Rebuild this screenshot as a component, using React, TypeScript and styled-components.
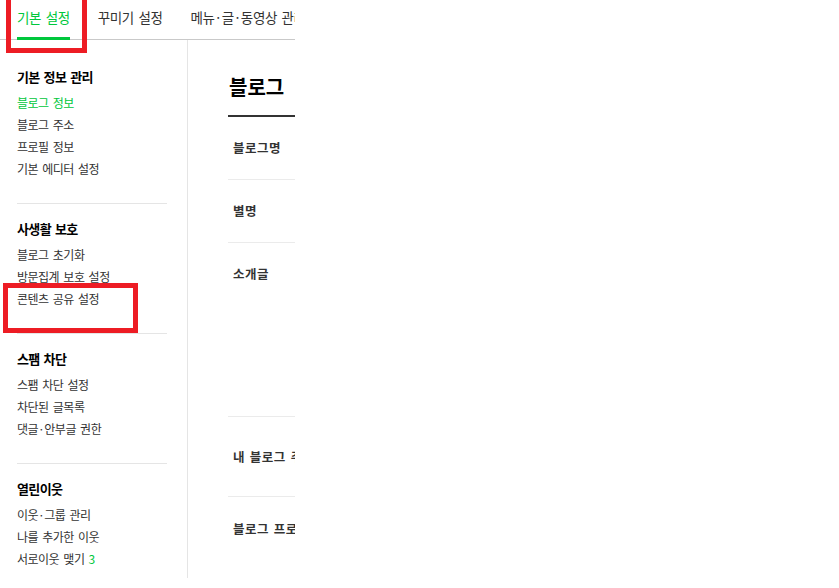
import React from 'react';
import styled, { createGlobalStyle } from 'styled-components';

const GlobalStyle = createGlobalStyle`
  html, body {
    margin: 0;
    padding: 0;
    background: #fff;
  }
  body {
    font-family: "Noto Sans CJK KR", "Noto Sans", sans-serif;
    color: #333;
  }
`;

const Viewport = styled.div`
  position: relative;
  width: 295px;
  height: 588px;
  overflow: hidden;
`;

const Page = styled.div`
  width: 900px;
`;

const TabBar = styled.div`
  display: flex;
  gap: 28px;
  height: 39px;
  padding-left: 17px;
  border-bottom: 1px solid #c9c9c9;
`;

const Tab = styled.div<{ $active?: boolean }>`
  box-sizing: border-box;
  height: 40px;
  margin-bottom: -1px;
  padding-top: 8px;
  font-size: 13.5px;
  letter-spacing: -0.4px;
  word-spacing: 2px;
  line-height: 18px;
  white-space: nowrap;
  color: ${p => (p.$active ? '#00c73c' : '#333')};
  border-bottom: 3px solid ${p => (p.$active ? '#00c73c' : 'transparent')};
`;

const Body = styled.div`
  display: flex;
`;

const Sidebar = styled.nav`
  width: 188px;
  height: 538px;
  padding-top: 12px;
  box-sizing: border-box;
  border-right: 1px solid #e5e5e5;
  flex-shrink: 0;
`;

const Group = styled.div<{ $last?: boolean }>`
  margin-left: 17px;
  width: 150px;
  padding: 15px 0 ${p => (p.$last ? '0' : '23px')};
  border-bottom: ${p => (p.$last ? 'none' : '1px solid #e5e5e5')};
`;

const GroupTitle = styled.div`
  font-size: 13px;
  font-weight: 700;
  letter-spacing: -0.6px;
  word-spacing: 1.5px;
  line-height: 20px;
  color: #000;
  margin-bottom: 5px;
`;

const MenuItem = styled.div<{ $active?: boolean }>`
  font-size: 12px;
  letter-spacing: -0.5px;
  word-spacing: 2px;
  line-height: 22px;
  color: ${p => (p.$active ? '#00c73c' : '#333')};
  white-space: nowrap;
`;

const Count = styled.span`
  color: #00c73c;
  margin-left: 4px;
`;

const Main = styled.main`
  flex: 1;
  padding-left: 40px;
`;

const Title = styled.h2`
  margin: 0;
  padding: 32px 0 13px 1px;
  font-size: 20px;
  font-weight: 700;
  line-height: 30px;
  word-spacing: 7px;
  color: #000;
  border-bottom: 2px solid #333;
  white-space: nowrap;
`;

const Row = styled.div<{ $h: number; $top?: boolean; $last?: boolean }>`
  display: flex;
  align-items: ${p => (p.$top ? 'flex-start' : 'center')};
  box-sizing: border-box;
  height: ${p => p.$h}px;
  padding-top: ${p => (p.$top ? '21px' : '0')};
  border-bottom: ${p => (p.$last ? 'none' : '1px solid #ebebeb')};
`;

const Label = styled.div`
  padding-left: 5px;
  width: 150px;
  font-size: 12.5px;
  font-weight: 700;
  line-height: 20px;
  letter-spacing: 0.5px;
  word-spacing: 1.5px;
  color: #333;
  white-space: nowrap;
`;

const Marker = styled.div<{ $x: number; $y: number; $w: number; $h: number }>`
  position: absolute;
  left: ${p => p.$x}px;
  top: ${p => p.$y}px;
  width: ${p => p.$w}px;
  height: ${p => p.$h}px;
  box-sizing: border-box;
  border: 5px solid #ed1c24;
  pointer-events: none;
`;

const groups = [
  { title: '기본 정보 관리', items: ['블로그 정보', '블로그 주소', '프로필 정보', '기본 에디터 설정'] },
  { title: '사생활 보호', items: ['블로그 초기화', '방문집계 보호 설정', '콘텐츠 공유 설정'] },
  { title: '스팸 차단', items: ['스팸 차단 설정', '차단된 글목록', '댓글·안부글 권한'] },
  { title: '열린이웃', items: ['이웃·그룹 관리', '나를 추가한 이웃', '서로이웃 맺기'] },
];

export default function App() {
  return (
    <Viewport>
      <GlobalStyle />
      <Page>
        <TabBar>
          <Tab $active>기본 설정</Tab>
          <Tab>꾸미기 설정</Tab>
          <Tab>메뉴·글·동영상 관리</Tab>
          <Tab>내 블로그 통계</Tab>
        </TabBar>
        <Body>
          <Sidebar>
            {groups.map((g, gi) => (
              <Group key={g.title} $last={gi === groups.length - 1}>
                <GroupTitle>{g.title}</GroupTitle>
                {g.items.map((item, ii) => (
                  <MenuItem key={item} $active={gi === 0 && ii === 0}>
                    {item}
                    {item === '서로이웃 맺기' && <Count>3</Count>}
                  </MenuItem>
                ))}
              </Group>
            ))}
          </Sidebar>
          <Main>
            <Title>블로그 정보</Title>
            <Row $h={63}><Label>블로그명</Label></Row>
            <Row $h={63}><Label>별명</Label></Row>
            <Row $h={174} $top><Label>소개글</Label></Row>
            <Row $h={80}><Label>내 블로그 주제</Label></Row>
            <Row $h={63} $last><Label>블로그 프로필 이미지</Label></Row>
          </Main>
        </Body>
      </Page>
      <Marker $x={6} $y={-10} $w={81} $h={63} />
      <Marker $x={3} $y={283} $w={135} $h={50} />
    </Viewport>
  );
}
